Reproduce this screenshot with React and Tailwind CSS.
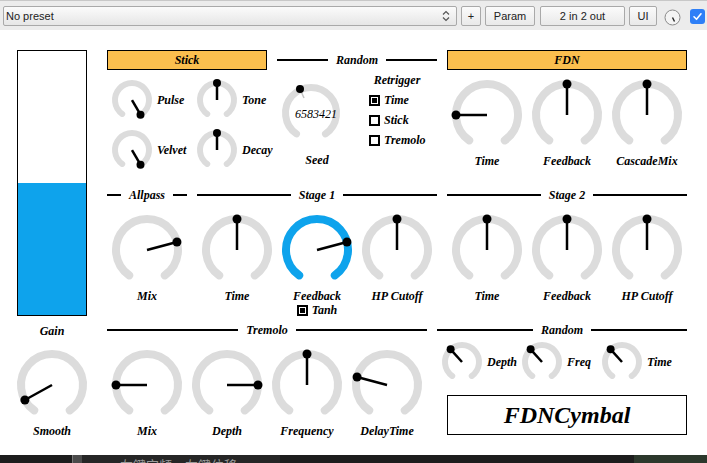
import React from 'react'

const serif = "font-['Liberation_Serif',serif] font-bold italic text-[12px] leading-[14px] text-black"

function Knob({ size = 74, r = 31, sw = 8, angle = 0, color = '#dcdcdc', dotR = 4.5, lineW = 2.5, span = 145 }) {
  const c = size / 2
  const pt = (a, rad) => [c + rad * Math.sin((a * Math.PI) / 180), c - rad * Math.cos((a * Math.PI) / 180)]
  const [x1, y1] = pt(-span, r)
  const [x2, y2] = pt(span, r)
  const [px, py] = pt(angle, r)
  return (
    <svg width={size} height={size} className="block shrink-0">
      <path d={`M${x1} ${y1} A${r} ${r} 0 1 1 ${x2} ${y2}`} stroke={color} strokeWidth={sw} fill="none" strokeLinecap="round" />
      <line x1={c} y1={c} x2={px} y2={py} stroke="black" strokeWidth={lineW} />
      <circle cx={px} cy={py} r={dotR} fill="black" />
    </svg>
  )
}

function BigKnob({ label, angle, color }) {
  return (
    <div className="w-[80px] flex flex-col items-center">
      <div className="mt-[8px]"><Knob angle={angle} color={color} /></div>
      <div className={`${serif} mt-[2px]`}>{label}</div>
    </div>
  )
}

function SmallKnob({ label, angle }) {
  return (
    <div className="flex items-center gap-[4px]">
      <Knob size={42} r={17} sw={6} dotR={4} lineW={2.5} angle={angle} />
      <span className={serif}>{label}</span>
    </div>
  )
}

function LineHead({ title }) {
  return (
    <div className="h-[20px] flex items-center gap-[8px]">
      <div className="flex-1 h-[2px] bg-black" />
      <span className={serif}>{title}</span>
      <div className="flex-1 h-[2px] bg-black" />
    </div>
  )
}

function BoxHead({ title }) {
  return (
    <div className={`h-[20px] border border-black bg-[#fbbf4e] flex items-center justify-center ${serif}`}>{title}</div>
  )
}

function Check({ checked, label }) {
  return (
    <div className="flex items-center gap-[4px] h-[20px]">
      <div className="w-[11px] h-[11px] border-2 border-black flex items-center justify-center">
        {checked && <div className="w-[5px] h-[5px] bg-black" />}
      </div>
      <span className={serif}>{label}</span>
    </div>
  )
}

function TbButton({ children, w }) {
  return (
    <div className={`${w} h-[20px] border border-[#a9a9a9] rounded-[2px] bg-gradient-to-b from-[#fbfbfb] to-[#e9e9e9] flex items-center justify-center text-[11px] text-[#222]`}>
      {children}
    </div>
  )
}

export default function App() {
  return (
    <div className="w-[707px] h-[463px] bg-white flex flex-col overflow-hidden">
      {/* host toolbar */}
      <div className="h-[30px] bg-[#ececec] border-t border-[#c8c8c8] flex items-start pt-[5px] pl-[3px] font-['Liberation_Sans',sans-serif]">
        <div className="w-[454px] h-[20px] border border-[#a9a9a9] rounded-[2px] bg-gradient-to-b from-[#fbfbfb] to-[#e6e6e6] flex items-center justify-between px-[2px] text-[11px] text-[#222]">
          <span>No preset</span>
          <svg width="10" height="14" viewBox="0 0 10 14" className="mr-[3px]">
            <path d="M2 5.5 L5 2.5 L8 5.5 M2 8.5 L5 11.5 L8 8.5" stroke="#555" strokeWidth="1.2" fill="none" />
          </svg>
        </div>
        <div className="ml-[4px]"><TbButton w="w-[20px]">+</TbButton></div>
        <div className="ml-[4px]"><TbButton w="w-[50px]">Param</TbButton></div>
        <div className="ml-[5px]"><TbButton w="w-[85px]">2 in 2 out</TbButton></div>
        <div className="ml-[4px]"><TbButton w="w-[28px]">UI</TbButton></div>
        <svg width="17" height="17" viewBox="0 0 17 17" className="ml-[7px] mt-[3px]">
          <circle cx="8.5" cy="8.5" r="7.5" fill="#f4f4f4" stroke="#8a8a8a" strokeWidth="1" />
          <line x1="8.5" y1="8.5" x2="10.5" y2="12.5" stroke="#222" strokeWidth="1.4" />
        </svg>
        <div className="ml-[9px] mt-[3px] w-[15px] h-[15px] rounded-[3px] bg-[#2e7ff7] flex items-center justify-center">
          <svg width="11" height="11" viewBox="0 0 11 11">
            <path d="M2 5.8 L4.5 8.3 L9 2.8" stroke="white" strokeWidth="1.6" fill="none" strokeLinecap="round" strokeLinejoin="round" />
          </svg>
        </div>
      </div>

      {/* plugin body */}
      <div className="flex-1 flex pl-[17px] pt-[20px]">
        {/* gain column */}
        <div className="w-[70px] flex flex-col items-center">
          <div className="w-[70px] h-[266px] border border-black flex flex-col">
            <div className="h-[132px] bg-white" />
            <div className="flex-1 bg-[#0ea3ec]" />
          </div>
          <div className={`${serif} mt-[8px]`}>Gain</div>
          <div className="mt-[10px]"><Knob angle={-119} /></div>
          <div className={`${serif} mt-[2px]`}>Smooth</div>
        </div>

        <div className="ml-[20px] w-[580px] flex flex-col">
          {/* row 1 */}
          <div className="h-[135px] flex gap-[10px]">
            <div className="w-[160px]">
              <BoxHead title="Stick" />
              <div className="grid grid-cols-[85px_75px] gap-y-[8px] pt-[9px] pl-[4px]">
                <SmallKnob label="Pulse" angle={150} />
                <SmallKnob label="Tone" angle={0} />
                <SmallKnob label="Velvet" angle={150} />
                <SmallKnob label="Decay" angle={0} />
              </div>
            </div>
            <div className="w-[160px]">
              <LineHead title="Random" />
              <div className="flex">
                <div className="w-[80px] flex flex-col">
                  <div className="relative mt-[8px] w-[68px]">
                    <svg width="68" height="68" className="block">
                      <path d="M19.5 55.9 A25.5 25.5 0 1 1 48.5 55.9" stroke="#dcdcdc" strokeWidth="7" fill="none" strokeLinecap="round" />
                      <line x1="27" y1="20" x2="23" y2="11" stroke="#c4c4c4" strokeWidth="1.5" />
                      <circle cx="23" cy="11" r="4" fill="black" />
                    </svg>
                    <span className="absolute left-[18px] top-[29px] font-['Liberation_Serif',serif] italic text-[12px] leading-[14px] text-black">6583421</span>
                  </div>
                  <div className={`${serif} mt-[7px] text-center w-[80px]`}>Seed</div>
                </div>
                <div className="w-[80px] flex flex-col">
                  <div className={`${serif} mt-[3px] text-center`}>Retrigger</div>
                  <div className="mt-[3px] pl-[12px]">
                    <Check checked label="Time" />
                    <Check label="Stick" />
                    <Check label="Tremolo" />
                  </div>
                </div>
              </div>
            </div>
            <div className="w-[240px]">
              <BoxHead title="FDN" />
              <div className="flex">
                <BigKnob label="Time" angle={-90} />
                <BigKnob label="Feedback" angle={0} />
                <BigKnob label="CascadeMix" angle={0} />
              </div>
            </div>
          </div>

          {/* row 2 */}
          <div className="h-[135px] flex gap-[10px]">
            <div className="w-[80px]">
              <LineHead title="Allpass" />
              <BigKnob label="Mix" angle={75} />
            </div>
            <div className="w-[240px]">
              <LineHead title="Stage 1" />
              <div className="flex">
                <BigKnob label="Time" angle={0} />
                <div className="w-[80px] flex flex-col items-center">
                  <BigKnob label="Feedback" angle={75} color="#0ea3ec" />
                  <div className="-mt-[3px]"><Check checked label="Tanh" /></div>
                </div>
                <BigKnob label="HP Cutoff" angle={0} />
              </div>
            </div>
            <div className="w-[240px]">
              <LineHead title="Stage 2" />
              <div className="flex">
                <BigKnob label="Time" angle={0} />
                <BigKnob label="Feedback" angle={0} />
                <BigKnob label="HP Cutoff" angle={0} />
              </div>
            </div>
          </div>

          {/* row 3 */}
          <div className="flex gap-[10px]">
            <div className="w-[320px]">
              <LineHead title="Tremolo" />
              <div className="flex">
                <BigKnob label="Mix" angle={-90} />
                <BigKnob label="Depth" angle={90} />
                <BigKnob label="Frequency" angle={0} />
                <BigKnob label="DelayTime" angle={-75} />
              </div>
            </div>
            <div className="w-[250px]">
              <LineHead title="Random" />
              <div className="grid grid-cols-[80px_80px_90px] pl-[4px] mt-[1px]">
                <SmallKnob label="Depth" angle={-42} />
                <SmallKnob label="Freq" angle={-42} />
                <SmallKnob label="Time" angle={-42} />
              </div>
              <div className="ml-[10px] mt-[12px] w-[240px] h-[40px] border border-black flex items-center justify-center font-['Liberation_Serif',serif] font-bold italic text-[24px] text-black">
                FDNCymbal
              </div>
            </div>
          </div>
        </div>
      </div>

      {/* host status strip */}
      <div className="h-[8px] bg-[#1d1d1d] flex overflow-hidden shrink-0">
        <div className="w-[72px]" />
        <div className="w-[10px] bg-[#4b4b4b] border-l border-[#777]" />
        <div className="w-[198px] bg-[#262626] overflow-hidden">
          <div className="pl-[38px] pt-[3px] text-[13px] leading-[13px] text-[#9a9a9a] whitespace-nowrap font-['Noto_Sans_CJK_TC',sans-serif]">左鍵定頻　左鍵位移</div>
        </div>
        <div className="flex-1" />
        <div className="w-[73px] bg-[#2c382c] bg-[radial-gradient(#5a6a5a_1px,transparent_1px)] bg-[length:8px_4px]" />
      </div>
    </div>
  )
}
